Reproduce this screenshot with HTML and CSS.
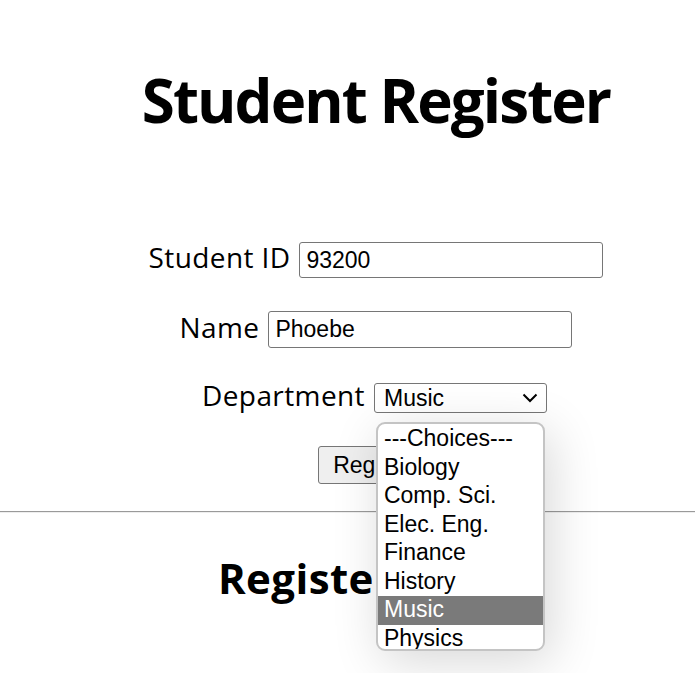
FILE: index.html
```html
<!DOCTYPE html>
<html>
<head>
<meta charset="utf-8">
<link rel="stylesheet" href="styles.css">
</head>
<body>
<div class="page">
  <h1 class="title">Student Register</h1>
  <form class="form">
    <div class="row row-id">
      <label class="label">Student ID</label>
      <input class="field" type="text" value="93200">
    </div>
    <div class="row row-name">
      <label class="label">Name</label>
      <input class="field field-tall" type="text" value="Phoebe">
    </div>
    <div class="row row-dept">
      <label class="label">Department</label>
      <div class="select-wrap">
        <div class="select">
          <span>Music</span>
          <svg class="chev" width="16" height="10" viewBox="0 0 16 10"><path d="M1.5 1.5 L8 8 L14.5 1.5" fill="none" stroke="#000" stroke-width="2"/></svg>
        </div>
        <div class="popup">
          <div class="opt">---Choices---</div>
          <div class="opt">Biology</div>
          <div class="opt">Comp. Sci.</div>
          <div class="opt">Elec. Eng.</div>
          <div class="opt">Finance</div>
          <div class="opt">History</div>
          <div class="opt sel">Music</div>
          <div class="opt">Physics</div>
        </div>
      </div>
    </div>
    <div class="row row-btn">
      <button class="btn" type="button">Register</button>
    </div>
  </form>
</div>
<hr class="rule">
<div class="page">
  <h2 class="sub">Registered List</h2>
</div>
</body>
</html>
```
FILE: styles.css
```css
html, body {
  margin: 0;
  padding: 0;
  background: #fff;
}
body {
  font-family: "Open Sans", "Noto Sans", sans-serif;
  color: #000;
  overflow: hidden;
  height: 673px;
}
.page {
  padding-left: 57px;
  text-align: center;
}
.title {
  margin: 0;
  padding-top: 60px;
  height: 82px;
  font-size: 60px;
  letter-spacing: -1.9px;
  font-weight: 700;
  line-height: 80px;
}
.form {
  margin-top: 100px;
  display: flex;
  flex-direction: column;
  align-items: center;
}
.row {
  display: flex;
  align-items: center;
  justify-content: center;
  gap: 9px;
}
.row-id {
  height: 36px;
}
.row-name {
  height: 37px;
  margin-top: 33px;
}
.row-dept {
  height: 30px;
  margin-top: 35px;
  margin-left: -3px;
}
.row-btn {
  height: 38px;
  margin-top: 33px;
}
.label {
  font-size: 28px;
  letter-spacing: 0.4px;
  line-height: 36px;
  margin-bottom: 6px;
  white-space: nowrap;
}
.field {
  box-sizing: border-box;
  width: 304px;
  height: 36px;
  border: 1px solid #767676;
  border-radius: 3px;
  padding: 0 6px;
  font-family: "Liberation Sans", Arial, sans-serif;
  font-size: 23px;
  color: #000;
  margin: 0;
}
.field-tall {
  height: 37px;
}
.select-wrap {
  position: relative;
}
.select {
  box-sizing: border-box;
  width: 173px;
  height: 30px;
  border: 1px solid #767676;
  border-radius: 3px;
  display: flex;
  align-items: center;
  justify-content: space-between;
  padding: 0 8px 0 9px;
  font-family: "Liberation Sans", Arial, sans-serif;
  font-size: 23px;
  text-align: left;
}
.chev {
  display: block;
}
.btn {
  box-sizing: border-box;
  height: 38px;
  padding: 0 14px;
  font-family: "Liberation Sans", Arial, sans-serif;
  font-size: 23px;
  background: #efefef;
  border: 1px solid #767676;
  border-radius: 3px;
  color: #000;
}
.rule {
  margin: 27px 0 0 0;
  border: 0;
  border-top: 1px solid #9a9a9a;
  border-bottom: 1px solid #eee;
  height: 0;
}
.sub {
  margin: 0;
  padding-top: 36px;
  font-size: 42px;
  letter-spacing: 0.4px;
  font-weight: 700;
}
.popup {
  position: absolute;
  left: 2px;
  top: 39px;
  width: 169px;
  height: 229px;
  box-sizing: border-box;
  background: #fff;
  border: 2px solid #c4c4c4;
  border-radius: 9px;
  box-shadow: 6px 10px 50px rgba(0,0,0,0.16);
  padding-top: 1px;
  overflow: hidden;
  text-align: left;
  z-index: 10;
}
.opt {
  height: 28.5px;
  line-height: 26.5px;
  padding-left: 6px;
  font-family: "Liberation Sans", Arial, sans-serif;
  font-size: 23px;
  white-space: nowrap;
}
.opt.sel {
  background: #7a7a7a;
  color: #fff;
}
```
